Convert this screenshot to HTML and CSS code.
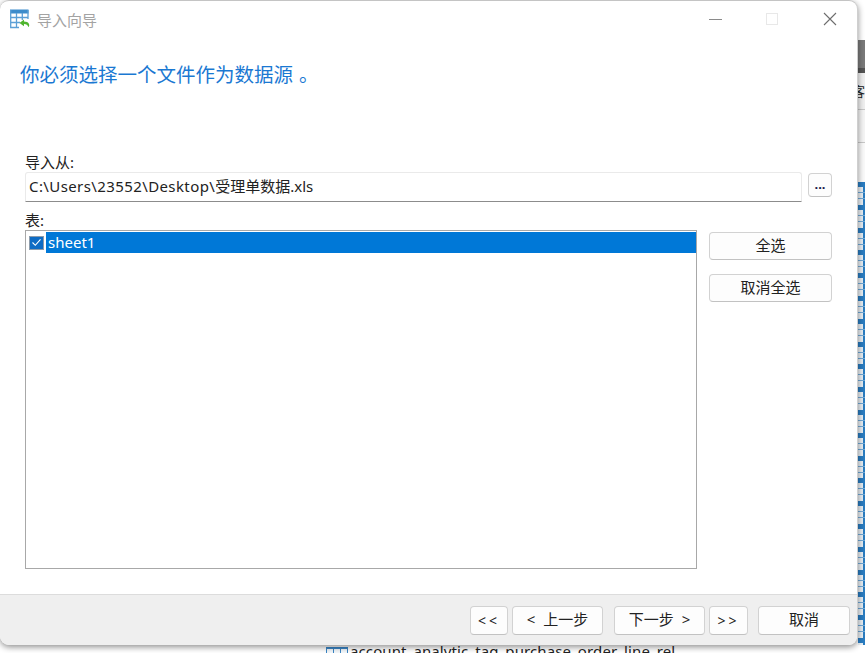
FILE: index.html
```html
<!DOCTYPE html>
<html>

<head>
  <title>导入向导</title>
  <link rel="stylesheet" href="styles.css">
</head>

<body>
  <div class="desktop">
    <div class="main-row">
      <div class="wizard">
        <div class="title-bar">
          <svg class="app-icon" width="20" height="20" viewBox="0 0 20 20">
            <path d="M0 0.500h18.500v4H0z" fill="#3d8ccb"/>
            <path d="M0.700 1v17.500H9M18 1v9M0.700 8.500H18M0.700 13.500H10M6.500 4v14.500M12.300 4v7" fill="none" stroke="#5b9fd6" stroke-width="1.300"/>
            <path d="M14 10.500l-4.500 3.400 4.500 3.400v-2.200c2.300 0 3.700.8 4.500 3.100.9-1 .9-2.200.4-3.400-.7-1.700-2.500-2.400-4.900-2.400z" fill="#4fb52e"/>
          </svg>
          <span class="title-text">导入向导</span>
          <div class="win-buttons">
            <span class="win-min"></span>
            <span class="win-max"></span>
            <svg class="win-close" width="14" height="14" viewBox="0 0 14 14">
              <path d="M1 1l12 12M13 1L1 13" stroke="#6e6e6e" stroke-width="1.100" fill="none"/>
            </svg>
          </div>
        </div>

        <div class="content">
          <h1 class="heading">你必须选择一个文件作为数据源<span class="heading-end">。</span></h1>

          <label class="field-label source-label">导入从:</label>
          <div class="file-row">
            <div class="file-input"><span class="file-dir">C:\Users\23552\Desktop\</span>受理单数据.xls</div>
            <button class="btn btn-browse">...</button>
          </div>

          <label class="field-label table-label">表:</label>
          <div class="table-row">
            <div class="table-list">
              <div class="list-item">
                <span class="check-box">
                  <svg width="11" height="9" viewBox="0 0 11 9">
                    <path d="M1.500 4.500l2.800 2.800 5.200-6" stroke="#fff" stroke-width="1.100" fill="none"/>
                  </svg>
                </span>
                <span class="item-name">sheet1</span>
              </div>
            </div>
            <div class="side-buttons">
              <button class="btn btn-side">全选</button>
              <button class="btn btn-side">取消全选</button>
            </div>
          </div>
        </div>

        <div class="footer">
          <button class="btn btn-first">&lt;&lt;</button>
          <button class="btn btn-step">&lt; 上一步</button>
          <button class="btn btn-step btn-next">下一步 &gt;</button>
          <button class="btn btn-last">&gt;&gt;</button>
          <button class="btn btn-step btn-cancel">取消</button>
        </div>
      </div>

      <div class="behind-right">
        <div class="strip-top"></div>
        <div class="strip-dark"></div>
        <div class="strip-cell">
          <span class="strip-char">客</span>
        </div>
        <div class="strip-blank"></div>
        <div class="strip-blank strip-last"></div>
        <div class="strip-icons"></div>
      </div>
    </div>

    <div class="behind-bottom">
      <span class="behind-icon"></span>
      <span class="behind-text">account_analytic_tag_purchase_order_line_rel</span>
    </div>
  </div>
</body>

</html>
```

FILE: styles.css
```css
* {
  box-sizing: border-box;
}

html,
body {
  margin: 0;
  height: 100%;
  overflow: hidden;
}

body {
  background: #fff;
  font-family: "Noto Sans", "Noto Sans CJK SC", sans-serif;
  color: #222;
}

.desktop {
  width: 865px;
  height: 653px;
  display: flex;
  flex-direction: column;
}

.main-row {
  display: flex;
  height: 645px;
}

/* wizard window */
.wizard {
  width: 858px;
  height: 645px;
  display: flex;
  flex-direction: column;
  background: #fff;
  border-top: 1px solid #c4c4c4;
  border-right: 1px solid #cfcfcf;
  border-radius: 9px;
  box-shadow: 0 2px 6px rgba(0, 0, 0, 0.45);
  overflow: hidden;
  position: relative;
  z-index: 1;
}

.title-bar {
  height: 39px;
  display: flex;
  align-items: center;
  padding-left: 10px;
  padding-bottom: 3px;
}

.app-icon {
  margin-right: 7px;
  margin-top: -1px;
}

.title-text {
  font-size: 15px;
  color: #a3a3a3;
}

.win-buttons {
  margin-left: auto;
  display: flex;
  align-items: center;
}

.win-min {
  width: 13px;
  height: 1px;
  background: #8a8a8a;
}

.win-max {
  width: 12px;
  height: 12px;
  margin-left: 44px;
  border: 1px solid #e8e8e8;
}

.win-close {
  margin-left: 45px;
  margin-right: 20px;
}

.content {
  flex: 1;
  padding: 0 25px;
}

.heading {
  margin: 21px 0 0 -5px;
  font-size: 19.500px;
  line-height: 28px;
  font-weight: normal;
  color: #1a78d2;
}

.heading-end {
  margin-left: 6px;
}

.field-label {
  display: block;
  font-size: 15px;
  line-height: 16px;
}

.source-label {
  margin-top: 65px;
}

.file-row {
  display: flex;
  align-items: flex-start;
  margin-top: 2px;
}

.file-input {
  width: 777px;
  height: 30px;
  padding-left: 3px;
  font-size: 15px;
  line-height: 26px;
  border: 1px solid #eaeaea;
  border-bottom: 1px solid #8c8c8c;
  border-radius: 3px 3px 0 0;
}

.file-dir {
  letter-spacing: 0.400px;
}

.btn {
  font-family: inherit;
  color: #222;
  background: #fdfdfd;
  border: 1px solid #d2d2d2;
  border-bottom-color: #c2c2c2;
  border-radius: 4px;
  padding: 0 0 3px;
}

.btn-browse {
  width: 24px;
  height: 24px;
  margin-left: 6px;
  margin-top: 1px;
  font-size: 13px;
  font-weight: bold;
  color: #1a1a4a;
}

.table-label {
  margin-top: 10px;
}

.table-row {
  display: flex;
  align-items: flex-start;
  margin-top: 2px;
}

.table-list {
  width: 672px;
  height: 339px;
  padding: 1px 0 0 1px;
  border: 1px solid #a8a8a8;
}

.list-item {
  display: flex;
  align-items: center;
  height: 21px;
}

.check-box {
  width: 15px;
  height: 14px;
  margin-left: 2px;
  margin-right: 2px;
  display: flex;
  align-items: center;
  justify-content: center;
  background: #0f6cc4;
  border: 1px solid #8d9cab;
}

.item-name {
  flex: 1;
  height: 21px;
  padding-left: 2px;
  font-size: 15px;
  line-height: 20px;
  color: #fff;
  background: #0078d7;
}

.side-buttons {
  margin-left: 12px;
  display: flex;
  flex-direction: column;
  gap: 14px;
  padding-top: 2px;
}

.btn-side {
  width: 123px;
  height: 28px;
  font-size: 15px;
}

.footer {
  height: 51px;
  flex-shrink: 0;
  display: flex;
  align-items: center;
  justify-content: flex-end;
  padding-right: 7px;
  gap: 4px;
  background: #efefef;
  border-top: 1px solid #dcdcdc;
}

.btn-first,
.btn-last {
  height: 29px;
  padding-bottom: 0;
  font-size: 14px;
  letter-spacing: 3px;
}

.btn-first {
  width: 38px;
}

.btn-last {
  width: 39px;
}

.btn-step {
  width: 91px;
  height: 29px;
  font-size: 15px;
  word-spacing: 4px;
}

.btn-next {
  margin-left: 7px;
}

.btn-cancel {
  width: 92px;
  margin-left: 6px;
}

/* what shows behind the window */
.behind-right {
  width: 7px;
  display: flex;
  flex-direction: column;
  overflow: hidden;
}

.strip-top {
  height: 40px;
  background: #fff;
}

.strip-dark {
  height: 33px;
  background: #7a7a7a;
  border-bottom: 5px solid #555;
}

.strip-cell {
  height: 37px;
  background: #f0f0f0;
  border-bottom: 1px solid #c8c8c8;
  font-size: 13px;
  line-height: 36px;
}

.strip-char {
  display: block;
  margin-left: -6px;
}

.strip-blank {
  height: 33px;
  background: #f5f5f5;
  border-bottom: 1px solid #c8c8c8;
}

.strip-last {
  height: 39px;
  background: #fafafa;
  border-bottom: 0;
}

.strip-icons {
  flex: 1;
  background:
    repeating-linear-gradient(to bottom,
      #2a7cc0 0, #2a7cc0 5px,
      transparent 5px, transparent 10px,
      #6fa8d6 10px, #6fa8d6 11px,
      transparent 11px, transparent 16px,
      #6fa8d6 16px, #6fa8d6 17px,
      transparent 17px, transparent 22.800px),
    linear-gradient(to right,
      #e8eef3 0, #e8eef3 5px,
      #2a7cc0 5px, #2a7cc0 7px);
}

.behind-bottom {
  height: 8px;
  display: flex;
  overflow: hidden;
  padding-left: 326px;
  background: #fff;
}

.behind-icon {
  width: 22px;
  height: 14px;
  margin-top: 2px;
  margin-right: 2px;
  border-top: 2px solid #3a86c6;
  background: repeating-linear-gradient(to right, #3a86c6 0, #3a86c6 1px, #f4f8fb 1px, #f4f8fb 7px);
}

.behind-text {
  font-size: 15px;
  line-height: 14px;
  margin-top: -1px;
  letter-spacing: 0.110px;
  white-space: nowrap;
}
```
